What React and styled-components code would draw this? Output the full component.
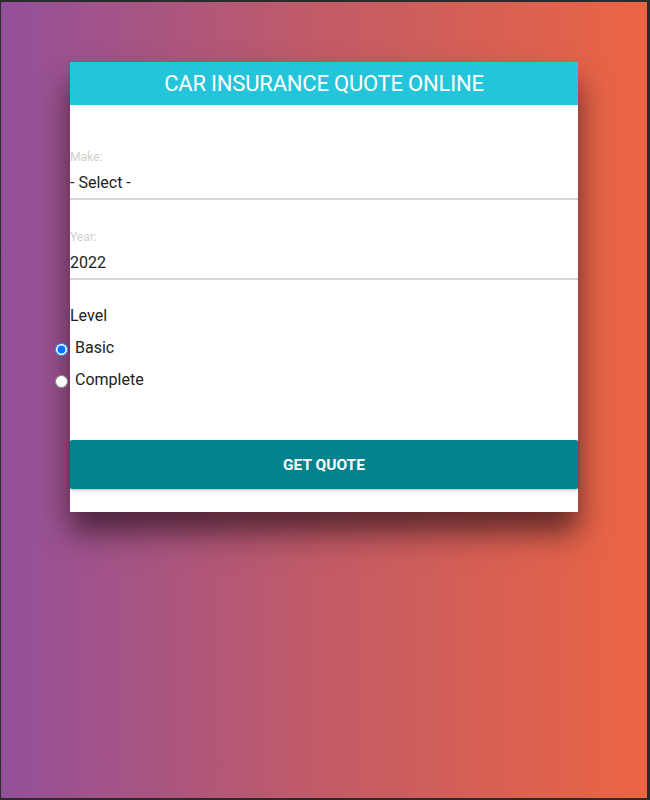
import styled, { createGlobalStyle } from "styled-components"

const GlobalStyle = createGlobalStyle`
    body {
        margin: 0;
        font-family: Roboto, 'Liberation Sans', sans-serif;
        background: #2b2b2b;
    }
`;

export default function App() {
    return (
        <Page>
            <GlobalStyle />
            <Card>
                <Header>Car Insurance Quote Online</Header>
                <Form>
                    <Field>
                        <FieldLabel>Make:</FieldLabel>
                        <FieldValue>- Select -</FieldValue>
                    </Field>
                    <Field>
                        <FieldLabel>Year:</FieldLabel>
                        <FieldValue>2022</FieldValue>
                    </Field>
                    <LevelTitle>Level</LevelTitle>
                    <RadioRow>
                        <Radio type="radio" name="level" defaultChecked />
                        Basic
                    </RadioRow>
                    <RadioRow>
                        <Radio type="radio" name="level" />
                        Complete
                    </RadioRow>
                    <SubmitButton type="button">Get Quote</SubmitButton>
                </Form>
            </Card>
        </Page>
    )
}

const Page = styled.main`
    width: 650px;
    height: 800px;
    box-sizing: border-box;
    border-style: solid;
    border-color: #2b2b2b;
    border-width: 2px 3px 2px 1px;
    padding: 60px 0 0 69px;
    background: linear-gradient(to right, #93509a 0%, #c25b66 50%, #ec6543 100%);
`;

const Card = styled.section`
    width: 508px;
    box-sizing: border-box;
    padding-bottom: 23px;
    background-color: #FFFFFF;
    box-shadow: 0px 20px 28px 0px rgba(30, 10, 20, 0.65);
`;

const Header = styled.h1`
    margin: 0;
    height: 43px;
    display: flex;
    justify-content: center;
    align-items: center;
    background-color: #24c5db;
    font-size: 22px;
    font-weight: 400;
    letter-spacing: -0.2px;
    text-transform: uppercase;
    color: #FFFFFF;
`;

const Form = styled.form`
    display: flex;
    flex-direction: column;
    padding-top: 15px;
`;

const Field = styled.div`
    display: flex;
    flex-direction: column;
    padding-top: 31px;
    border-bottom: 2px solid #d6d6d6;
`;

const FieldLabel = styled.label`
    font-size: 12px;
    line-height: 12px;
    color: #cfcfcf;
    margin-bottom: 5px;
`;

const FieldValue = styled.div`
    height: 30px;
    font-size: 16px;
    line-height: 30px;
    color: #222222;
`;

const LevelTitle = styled.div`
    margin-top: 26px;
    font-size: 16px;
    line-height: 20px;
    color: #222222;
`;

const RadioRow = styled.label`
    display: flex;
    align-items: center;
    height: 32px;
    font-size: 16px;
    color: #222222;
    &:first-of-type {
        margin-top: 5px;
    }
`;

const Radio = styled.input`
    width: 13px;
    height: 13px;
    margin: 5px 7px 0 -15px;
`;

const SubmitButton = styled.button`
    margin-top: 45px;
    height: 49px;
    border: none;
    border-radius: 2px;
    background-color: #01838f;
    box-shadow: 0px 1px 3px rgba(0, 0, 0, 0.3);
    font-family: Roboto, 'Liberation Sans', sans-serif;
    font-size: 15.5px;
    font-weight: 700;
    text-transform: uppercase;
    color: #FFFFFF;
`;
